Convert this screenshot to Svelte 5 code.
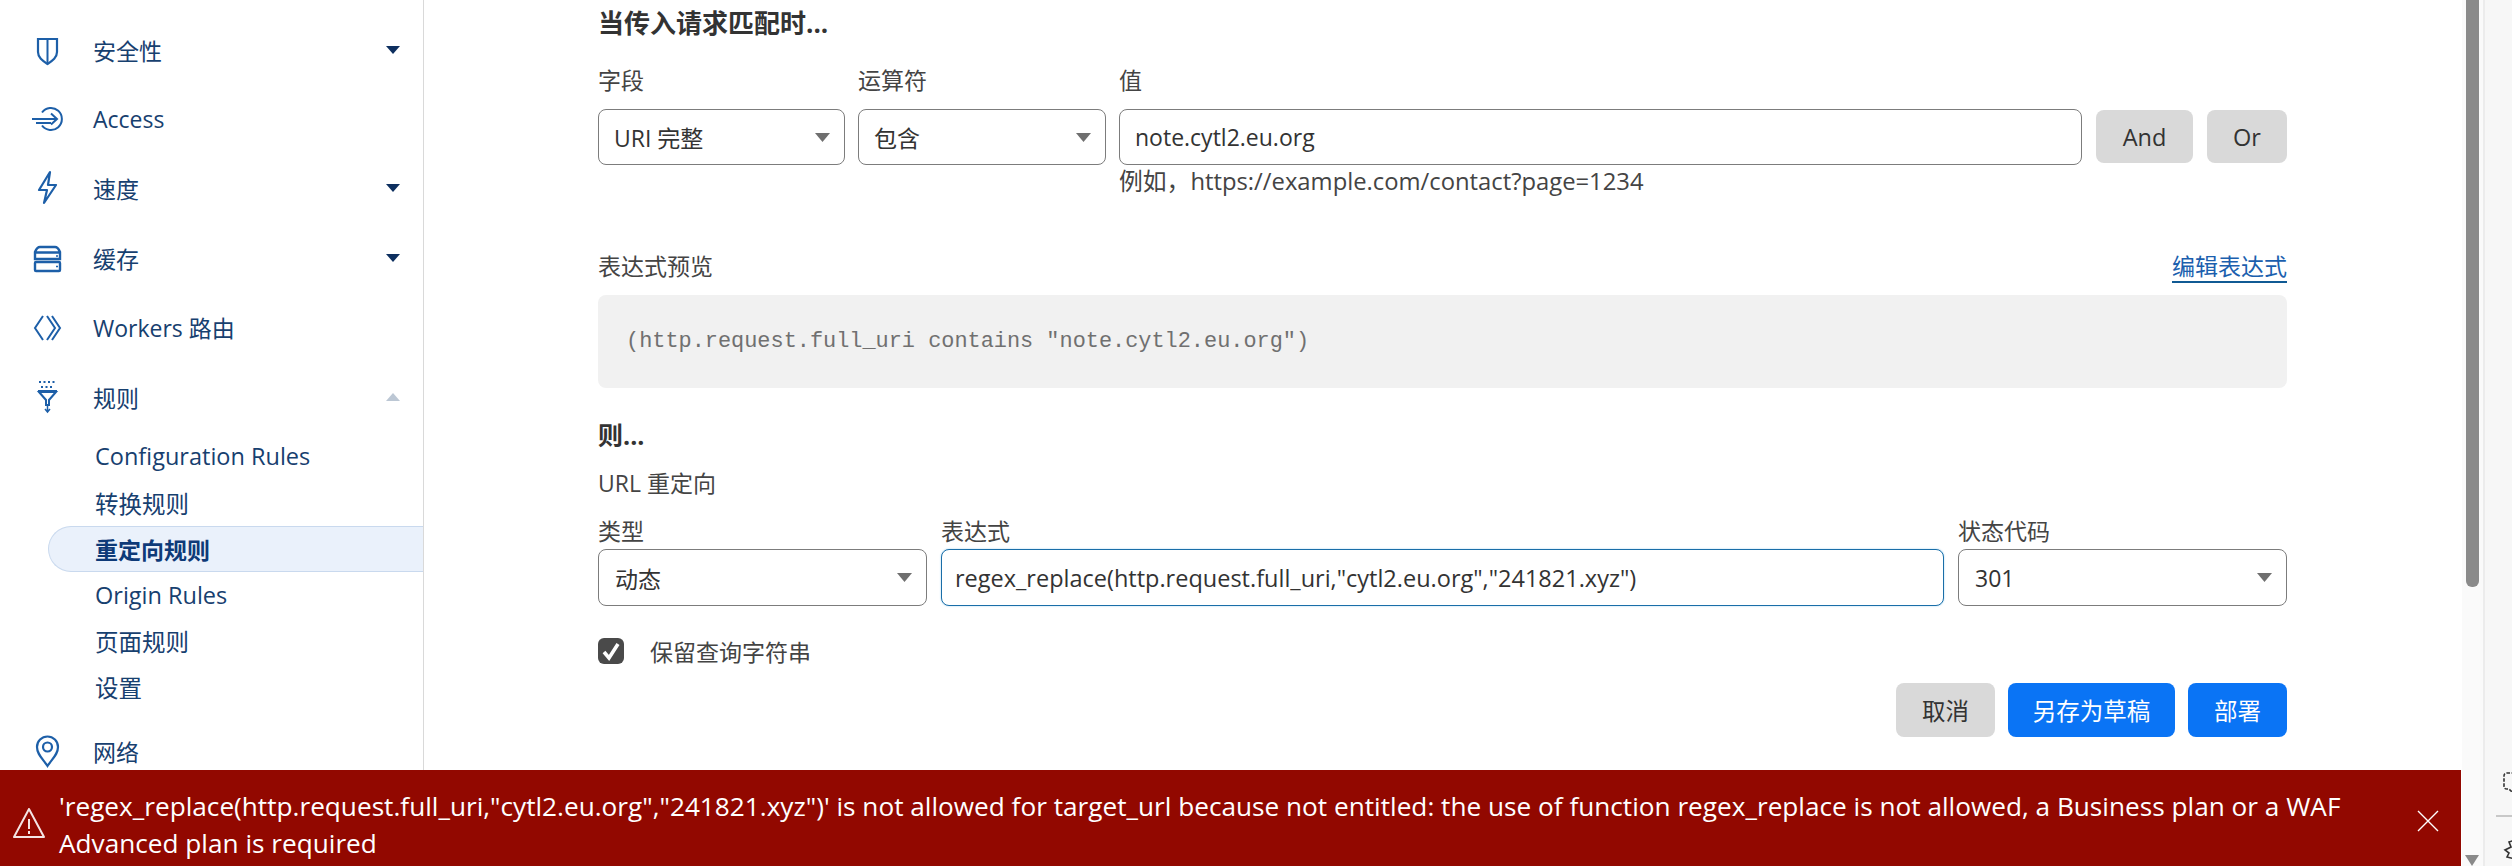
<script>
  const groups = [
    { label: '安全性', icon: 'shield', caret: 'down' },
    { label: 'Access', icon: 'access' },
    { label: '速度', icon: 'bolt', caret: 'down' },
    { label: '缓存', icon: 'cache', caret: 'down' },
    { label: 'Workers 路由', icon: 'workers' },
    { label: '规则', icon: 'funnel', caret: 'up' }
  ];
  const subs = ['Configuration Rules', '转换规则', '重定向规则', 'Origin Rules', '页面规则', '设置'];
</script>

{#snippet caretSvg()}
  <svg class="sel-caret" width="15" height="9" viewBox="0 0 15 9"><path d="M0 0h15L7.500 9z" fill="#6f6f6f"/></svg>
{/snippet}

{#snippet navIcon(name)}
  <svg class="nav-icon" width="36" height="36" viewBox="0 0 36 36" fill="none" stroke="#1d5fa8" stroke-width="2">
    {#if name === 'shield'}
      <path d="M9 7h19v13c0 6-5 9-9.500 12C14 29 9 26 9 20z" stroke-width="2.200"/><path d="M18.500 7v24" />
    {:else if name === 'access'}
      <path d="M13 11.500A11 11 0 1 1 13 24.500" /><path d="M3 18h25M22 12.500l6 5.500-6 5.500M7 22h15" />
    {:else if name === 'bolt'}
      <path d="M21 2 10 20h8l-3 13 12-18h-8z" stroke-width="2.200" stroke-linejoin="round"/>
    {:else if name === 'cache'}
      <path d="M11 7h15q3 0 5 5v7H6v-7q2-5 5-5zM6 12.500h25" stroke-width="2.400"/><rect x="6" y="22" width="25" height="9" rx="1" stroke-width="2.400"/>
      <path d="M27 16h2M27 26.500h2" stroke-width="1.400"/>
    {:else if name === 'workers'}
      <path d="M14 7 6 19l8 12M18 7l8 12-8 12M23 7l8 12-8 12" stroke-width="2"/>
    {:else if name === 'funnel'}
      <path d="M9 12h19M10 13l7 8v5h3v-5l7-8z" stroke-width="2"/><path d="M18.500 26v6M16 30l2.500 3 2.500-3" stroke-width="1.500"/><path d="M10 3h17M12 8h13" stroke-dasharray="2 2.500" stroke-width="2"/>
    {/if}
  </svg>
{/snippet}

<div class="page">
  <aside class="sidebar">
    <nav class="groups">
      {#each groups as g}
        <div class="group">
          <span class="icon-slot">{@render navIcon(g.icon)}</span>
          <span class="label">{g.label}</span>
          {#if g.caret === 'down'}<span class="caret"></span>{/if}
          {#if g.caret === 'up'}<span class="caret up"></span>{/if}
        </div>
      {/each}
    </nav>
    <div class="subs">
      {#each subs as s, i}
        <div class="sub" class:active={i === 2}>{s}</div>
      {/each}
    </div>
    <div class="group net">
      <span class="icon-slot">
        <svg width="36" height="36" viewBox="0 0 36 36" fill="none" stroke="#1d5fa8" stroke-width="2.200"><path d="M18.500 33C13 25 8 21 8 14a10.500 10.500 0 0 1 21 0c0 7-5 11-10.500 19z"/><circle cx="18.500" cy="14" r="4.500"/></svg>
      </span>
      <span class="label">网络</span>
    </div>
  </aside>

  <main class="main">
    <div class="content">
      <h2 class="h-when">当传入请求匹配时...</h2>
      <div class="row-when">
        <div class="col c1">
          <label>字段</label>
          <div class="select"><span>URI 完整</span>{@render caretSvg()}</div>
        </div>
        <div class="col c2">
          <label>运算符</label>
          <div class="select"><span>包含</span>{@render caretSvg()}</div>
        </div>
        <div class="col grow">
          <label>值</label>
          <div class="input">note.cytl2.eu.org</div>
          <div class="hint">例如，https://example.com/contact?page=1234</div>
        </div>
        <div class="andor">
          <button class="btn grey and">And</button>
          <button class="btn grey or">Or</button>
        </div>
      </div>

      <div class="preview-head">
        <span>表达式预览</span>
        <a href="#edit" class="edit">编辑表达式</a>
      </div>
      <div class="preview">(http.request.full_uri contains "note.cytl2.eu.org")</div>

      <h2 class="h-then">则...</h2>
      <div class="redir">URL 重定向</div>
      <div class="row-then">
        <div class="col t1">
          <label>类型</label>
          <div class="select tall"><span>动态</span>{@render caretSvg()}</div>
        </div>
        <div class="col grow">
          <label>表达式</label>
          <div class="input tall focus">regex_replace(http.request.full_uri,"cytl2.eu.org","241821.xyz")</div>
        </div>
        <div class="col t3">
          <label>状态代码</label>
          <div class="select tall"><span>301</span>{@render caretSvg()}</div>
        </div>
      </div>
      <div class="check-row">
        <span class="check">
          <svg width="24" height="26" viewBox="0 0 24 26"><path d="M5 14l5 6 9-14" fill="none" stroke="#fff" stroke-width="3.600"/></svg>
        </span>
        <span>保留查询字符串</span>
      </div>
      <div class="actions">
        <button class="btn grey cancel">取消</button>
        <button class="btn blue draft">另存为草稿</button>
        <button class="btn blue deploy">部署</button>
      </div>
    </div>
  </main>

  <div class="scrollbar">
    <div class="thumb"></div>
    <span class="arrow"></span>
  </div>
  <div class="rail">
    <svg class="rail-a" width="12" height="24" viewBox="0 0 12 24" fill="none" stroke="#333" stroke-width="1.600"><path d="M12 2H4Q1 2 1 5v10q0 3 3 3h2l2 2 4 1" stroke-dasharray="3.500 1.500"/></svg>
    <div class="rail-line"></div>
    <svg class="rail-b" width="12" height="22" viewBox="0 0 12 22" fill="none" stroke="#333" stroke-width="1.600"><path d="M12 1 6 3l2 5-6 3 4 3-2 4 8 2"/></svg>
  </div>

  <div class="toast">
    <svg class="warn" width="34" height="32" viewBox="0 0 34 32" fill="none" stroke="#f4e4e4" stroke-width="2"><path d="M17 2 2 30h30z" stroke-linejoin="round"/><path d="M17 12v10M17 24v3"/></svg>
    <div class="toast-text">'regex_replace(http.request.full_uri,"cytl2.eu.org","241821.xyz")' is not allowed for target_url because not entitled: the use of function regex_replace is not allowed, a Business plan or a WAF Advanced plan is required</div>
    <svg class="close" width="22" height="22" viewBox="0 0 22 22" fill="none" stroke="#fff" stroke-width="1.400"><path d="M1 1l20 20M21 1 1 21"/></svg>
  </div>
</div>

<style>
  :global(body) { margin: 0; background: #fff; }
  .page {
    width: 2512px; height: 866px; position: relative; overflow: hidden; display: flex;
    font-family: "Open Sans", "Noto Sans CJK SC", sans-serif; color: #333; background: #fff;
  }
  .sidebar {
    width: 424px; height: 866px; flex: none; border-right: 1px solid #d9d9d9; box-sizing: border-box;
    padding-top: 15px; color: #0e3a6e;
  }
  .group { display: flex; align-items: center; height: 69.400px; font-size: 23px; color: #17406f; }
  .icon-slot { width: 93px; display: flex; justify-content: center; box-sizing: border-box; flex: none; }
  .nav-icon { display: block; }
  .label { flex: 1; }
  .caret {
    width: 0; height: 0; border-left: 7px solid transparent; border-right: 7px solid transparent;
    border-top: 8px solid #0d2f5f; margin-right: 23px;
  }
  .caret.up { border-top: 0; border-bottom: 8px solid #bcc7d4; }
  .subs { margin-top: 2px; display: flex; flex-direction: column; }
  .sub {
    height: 46.200px; margin-left: 48px; padding-left: 46px; display: flex; align-items: center;
    font-size: 23.500px; color: #17406f; box-sizing: border-box; border: 1px solid transparent; border-right: 0;
  }
  .sub.active {
    background: #eaf1fb; border-color: #c9d9ee; border-radius: 23px 0 0 23px; font-weight: 700; color: #0e3a78;
    font-size: 23px;
  }
  .group.net { margin-top: 6px; }
  .main { width: 2037px; flex: none; box-sizing: border-box; padding-left: 174px; }
  .content { width: 1689px; }
  .h-when { margin: 6px 0 0; font-size: 26px; line-height: 34px; font-weight: 700; color: #333; }
  .row-when { display: flex; gap: 13px; margin-top: 24px; height: 133px; }
  label { display: block; font-size: 23px; line-height: 32px; color: #444; }
  .col.c1 { width: 247px; }
  .col.c2 { width: 248px; }
  .col.grow { flex: 1; min-width: 0; }
  .select, .input {
    height: 56px; box-sizing: border-box; border: 1.500px solid #7c7c7c; border-radius: 8px; margin-top: 13px;
    padding: 0 15px; display: flex; align-items: center; font-size: 23px; color: #333; background: #fff;
  }
  .select { justify-content: space-between; padding-right: 14px; }
  .tall { height: 57px; margin-top: 2px; }
  .input.tall { font-size: 23.500px; }
  .focus { border-color: #1a6ea8; box-shadow: 0 0 2px #9fd0ee; padding-left: 13px; }
  .hint { font-size: 23.800px; line-height: 32px; color: #444; }
  .andor { display: flex; gap: 14px; align-self: flex-start; margin-top: 46px; margin-left: 1px; }
  .btn {
    border: 0; border-radius: 8px; height: 54px; font: inherit; font-size: 23.500px; padding: 0; text-align: center;
  }
  .grey { background: #d9d9d9; color: #333; }
  .blue { background: #0a74f5; color: #fff; }
  .and { width: 97px; height: 53px; }
  .or { width: 80px; height: 53px; }
  .preview-head { display: flex; justify-content: space-between; font-size: 23px; line-height: 32px; color: #444; margin-top: 53px; }
  .edit { color: #1b5fae; text-decoration: none; border-bottom: 2px solid #105a94; height: 33px; box-sizing: border-box; }
  .preview {
    background: #f1f1f1; border-radius: 8px; height: 93px; margin-top: 12px; padding: 0 28px; display: flex; align-items: center;
    font-family: "Liberation Mono", monospace; font-size: 21.900px; color: #707070; white-space: pre;
  }
  .h-then { margin: 30px 0 0; font-size: 25px; line-height: 34px; font-weight: 700; color: #333; }
  .redir { font-size: 23px; line-height: 32px; color: #444; margin-top: 15px; }
  .row-then { display: flex; gap: 14px; margin-top: 16px; }
  .t1 { width: 329px; }
  .t3 { width: 329px; }
  .t3 .select, .t1 .select { padding-left: 16px; }
  .check-row { display: flex; align-items: center; gap: 26px; font-size: 23px; color: #444; margin-top: 32px; height: 26px; }
  .check { width: 26px; height: 26px; border-radius: 6px; background: #4a4a4a; display: flex; align-items: center; justify-content: center; }
  .actions { display: flex; justify-content: flex-end; gap: 13px; margin-top: 19px; }
  .cancel { width: 99px; }
  .draft { width: 167px; }
  .deploy { width: 99px; }
  .scrollbar { position: absolute; left: 2462px; top: 0; width: 21px; height: 866px; background: #fafafa; }
  .thumb { position: absolute; left: 4px; top: 0; width: 13px; height: 587px; background: #8a8a8a; border-radius: 0 0 6px 6px; }
  .arrow { position: absolute; left: 3px; top: 855px; border-left: 7px solid transparent; border-right: 7px solid transparent; border-top: 11px solid #8a8a8a; }
  .rail { position: absolute; left: 2483px; top: 0; width: 29px; height: 866px; background: #f7f7f7; border-left: 2px solid #ececec; box-sizing: border-box; }
  .rail-a { position: absolute; left: 18px; top: 771px; }
  .rail-line { position: absolute; left: 11px; right: 0; top: 815px; height: 2px; background: #c8c8c8; }
  .rail-b { position: absolute; left: 18px; top: 839px; }
  .toast {
    position: absolute; left: 0; top: 770px; width: 2461px; height: 96px; background: #920800; color: #fff;
    font-size: 26.200px; line-height: 37px;
  }
  .toast-text { position: absolute; left: 59px; top: 18px; width: 2372px; }
  .warn { position: absolute; left: 12px; top: 37px; }
  .close { position: absolute; left: 2417px; top: 40px; }
</style>
